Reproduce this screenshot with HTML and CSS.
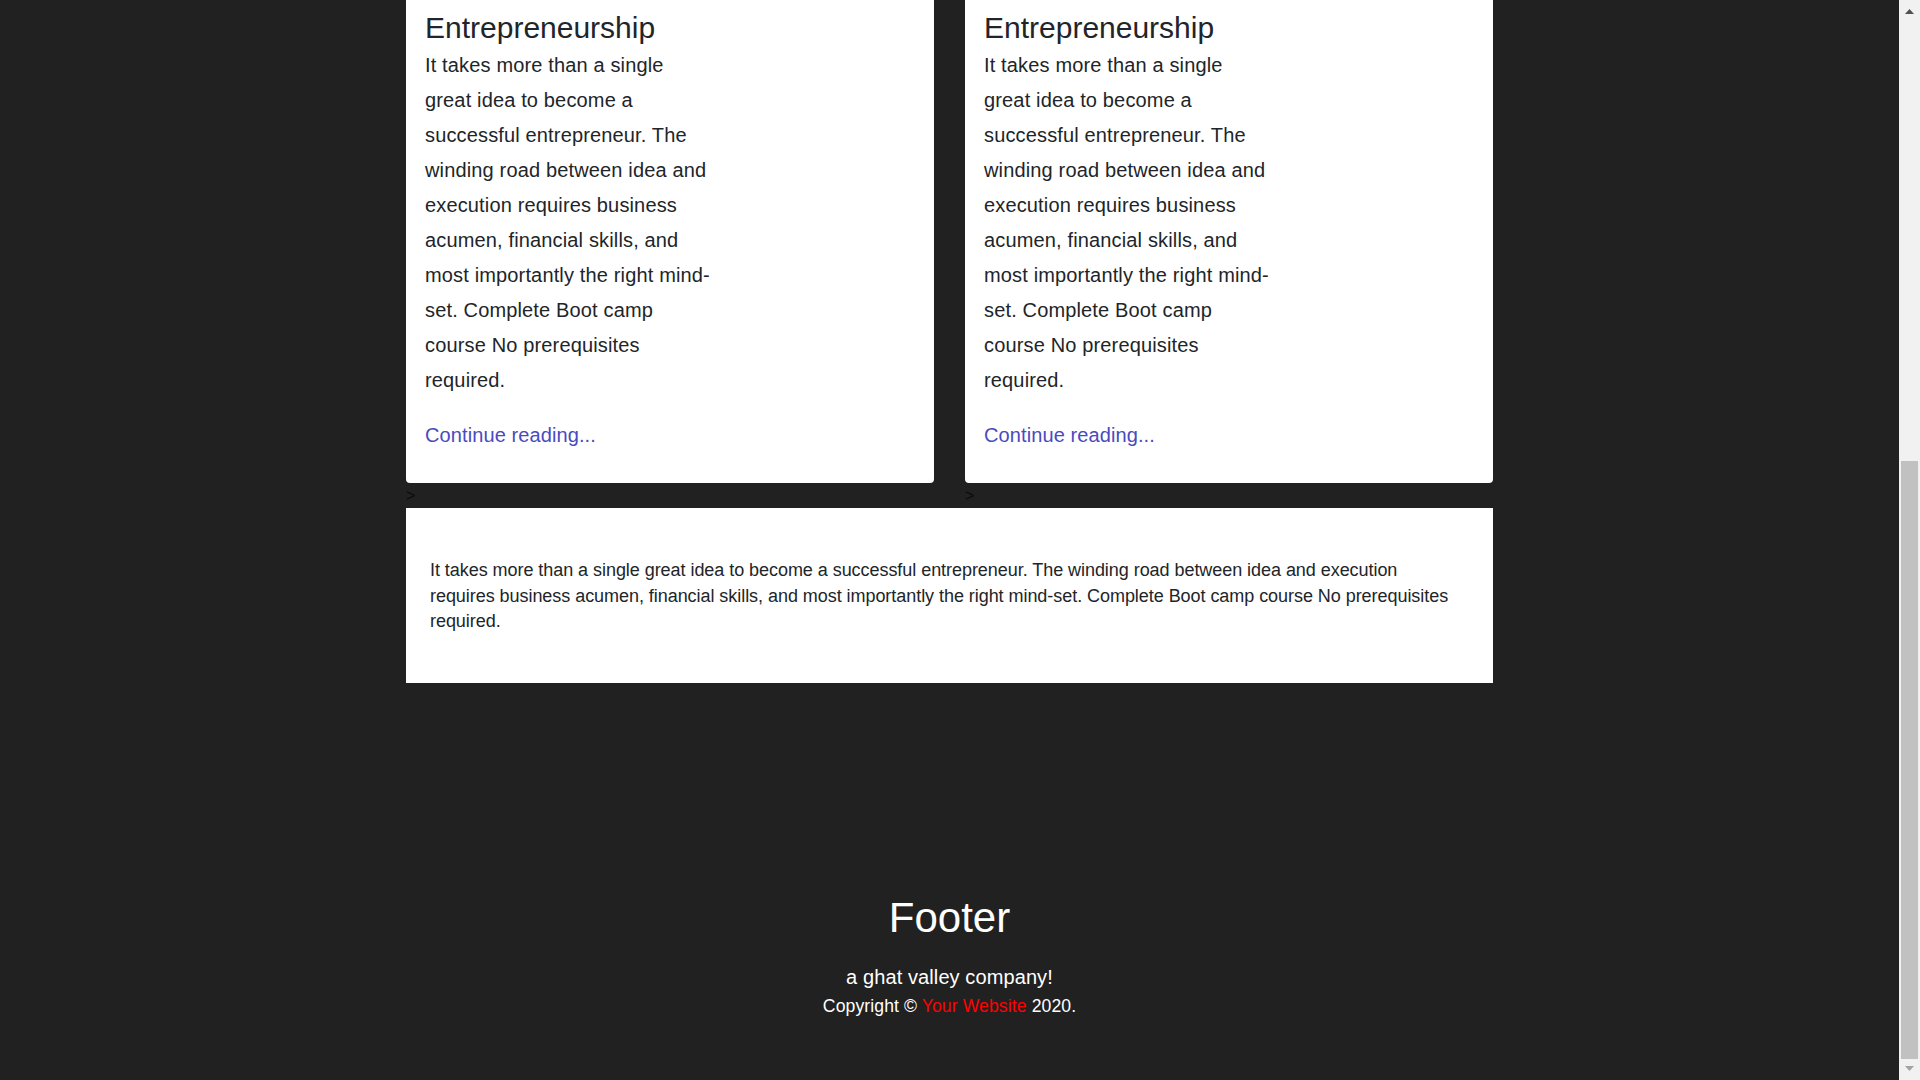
FILE: index.html
```html
<!DOCTYPE html>
<html lang="en">
<head>
<meta charset="utf-8">
<title>Entrepreneurship</title>
<link rel="stylesheet" href="styles.css">
</head>
<body>
<div class="app">
  <div class="viewport">
    <div class="page">
      <header class="masthead"></header>
      <main class="container">
        <div class="posts">
          <div class="post-col">
            <article class="card">
              <svg class="card-media" width="100%" height="180" aria-hidden="true"><rect width="100%" height="100%" fill="#ffffff"/></svg>
              <h3 class="card-title">Entrepreneurship</h3>
              <p class="card-text">It takes more than a single great idea to become a successful entrepreneur. The winding road between idea and execution requires business acumen, financial skills, and most importantly the right mind-set. Complete Boot camp course No prerequisites required.</p>
              <a class="card-link" href="#">Continue reading...</a>
            </article>
            <span class="stray">&gt;</span>
          </div>
          <div class="post-col">
            <article class="card">
              <svg class="card-media" width="100%" height="180" aria-hidden="true"><rect width="100%" height="100%" fill="#ffffff"/></svg>
              <h3 class="card-title">Entrepreneurship</h3>
              <p class="card-text">It takes more than a single great idea to become a successful entrepreneur. The winding road between idea and execution requires business acumen, financial skills, and most importantly the right mind-set. Complete Boot camp course No prerequisites required.</p>
              <a class="card-link" href="#">Continue reading...</a>
            </article>
            <span class="stray">&gt;</span>
          </div>
        </div>
        <section class="lead-card">
          <p>It takes more than a single great idea to become a successful entrepreneur. The winding road between idea and execution requires business acumen, financial skills, and most importantly the right mind-set. Complete Boot camp course No prerequisites required.</p>
        </section>
      </main>
      <footer class="site-footer">
        <h2 class="footer-title">Footer</h2>
        <p class="tagline">a ghat valley company!</p>
        <p class="copyright">Copyright © <a class="footer-link" href="#">Your Website</a> 2020.</p>
      </footer>
    </div>
  </div>
  <div class="scrollbar" aria-hidden="true">
    <svg class="sb-button" width="21" height="21" viewBox="0 0 21 21"><polygon points="6,14 10.5,9 15,14" fill="#505050"/></svg>
    <div class="sb-track"></div>
    <div class="sb-thumb"></div>
    <svg class="sb-button" width="21" height="21" viewBox="0 0 21 21"><polygon points="6,7 15,7 10.5,12" fill="#a3a3a3"/></svg>
  </div>
</div>
</body>
</html>
```

FILE: styles.css
```css
html, body {
  margin: 0;
  padding: 0;
  height: 100%;
  overflow: hidden;
  background: #212121;
}

body {
  font-family: "Liberation Sans", Arial, sans-serif;
  color: #212529;
}

.app {
  display: flex;
  height: 100vh;
}

.viewport {
  flex: 1;
  min-width: 0;
  height: 100vh;
  overflow-y: scroll;
  overflow-x: hidden;
  display: flex;
  flex-direction: column-reverse;
  background: #212121;
  scrollbar-width: none;
}

.viewport::-webkit-scrollbar {
  display: none;
}

.scrollbar {
  flex: none;
  width: 21px;
  height: 100vh;
  background: #f1f1f1;
  display: flex;
  flex-direction: column;
}

.sb-button {
  display: block;
  flex: none;
}

.sb-track {
  flex: 1;
}

.sb-thumb {
  flex: none;
  height: 598px;
  margin: 0 2px;
  background: #c1c1c1;
}

.page {
  flex: none;
}

.masthead {
  height: 604px;
}

.container {
  width: 1087px;
  margin: 0 auto;
}

.posts {
  display: grid;
  grid-template-columns: 1fr 1fr;
  column-gap: 31px;
}

.post-col {
  display: flex;
  flex-direction: column;
}

.card {
  background: #ffffff;
  border-radius: 4px;
  padding: 20px 19px 30px;
  display: flex;
  flex-direction: column;
  align-items: flex-start;
}

.card-media {
  display: block;
  width: 100%;
  height: 180px;
}

.card-title {
  margin: 0 0 2px;
  font-size: 30px;
  line-height: 36px;
  font-weight: 400;
  color: #212529;
}

.card-text {
  width: 287px;
  margin: 0 0 20px;
  font-size: 20px;
  line-height: 35px;
  letter-spacing: 0.15px;
  color: #212529;
}

.card-link {
  display: block;
  font-size: 20px;
  line-height: 35px;
  letter-spacing: 0.1px;
  color: #4a4ac0;
  text-decoration: none;
}

.stray {
  display: block;
  font-size: 16px;
  line-height: 25.4px;
  color: #0a0a0a;
}

.lead-card {
  background: #ffffff;
  padding: 50px 30px 49px 24px;
}

.lead-card p {
  margin: 0;
  font-size: 18px;
  line-height: 25.2px;
  letter-spacing: -0.05px;
  color: #212529;
}

.site-footer {
  padding: 210px 0 61px;
  text-align: center;
  color: #ffffff;
}

.footer-title {
  margin: 0 0 19px;
  font-size: 42px;
  line-height: 50px;
  font-weight: 400;
}

.tagline {
  margin: 0;
  font-size: 20px;
  line-height: 30px;
  letter-spacing: 0.1px;
}

.copyright {
  margin: 1px 0 0;
  font-size: 17.6px;
  line-height: 26px;
  letter-spacing: 0.1px;
}

.footer-link {
  color: #ff0000;
  text-decoration: none;
}
```
